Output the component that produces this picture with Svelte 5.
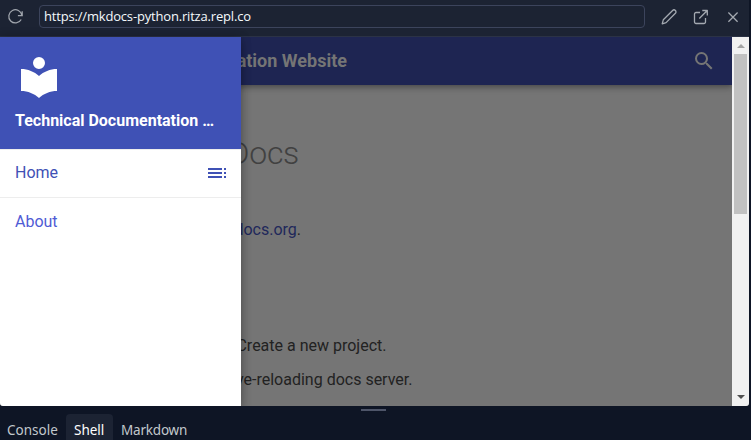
<script>
  const nav = [{ label: 'Home', toc: true }, { label: 'About', toc: false }];
  const tabs = ['Console', 'Shell', 'Markdown'];
  let active = $state('Shell');
</script>

<div class="workspace">
  <section class="browser">
    <header class="address">
      <svg class="reload" width="18" height="18" viewBox="0 0 18 18" fill="none" stroke="#a0a5ad" stroke-width="1.25">
        <path d="M16.200 3.200v4.300h-4.300M15.900 7.300A6.600 6.600 0 1 0 15.200 11.500" />
      </svg>
      <div class="url"><span>https://mkdocs-python.ritza.repl.co</span></div>
      <svg class="edit" width="18" height="18" viewBox="0 0 18 18" fill="none" stroke="#a4a9b1" stroke-width="1.3" stroke-linejoin="round">
        <path d="M2.200 15.900l1.100-4.100L12.600 2.500a1.900 1.900 0 0 1 2.800 2.800L6.100 14.600z" />
      </svg>
      <svg class="open" width="18" height="18" viewBox="0 0 18 18" fill="none" stroke="#a4a9b1" stroke-width="1.3" stroke-linejoin="round">
        <path d="M8 4.500H4a1.500 1.500 0 0 0-1.500 1.500v8A1.500 1.500 0 0 0 4 15.500h8a1.500 1.500 0 0 0 1.500-1.500v-4M10.300 2.500h5v5M15 2.800L7.300 10.500" />
      </svg>
      <svg class="close" width="18" height="18" viewBox="0 0 18 18" fill="none" stroke="#a4a9b1" stroke-width="1.25">
        <path d="M4.400 4.500l9.200 9.200M13.600 4.500l-9.200 9.200" />
      </svg>
    </header>

    <div class="viewport">
      <div class="page">
        <div class="masthead">
          <strong>Technical Documentation Website</strong>
          <svg width="24" height="24" viewBox="0 0 24 24" fill="#757575">
            <path d="M9.500 3A6.500 6.500 0 0 1 16 9.500c0 1.610-.590 3.090-1.560 4.230l.270.270h.790l5 5-1.500 1.500-5-5v-.790l-.270-.270A6.516 6.516 0 0 1 9.500 16a6.500 6.500 0 0 1 0-13m0 2C7 5 5 7 5 9.500S7 14 9.500 14 14 12 14 9.500 12 5 9.500 5z" />
          </svg>
        </div>
        <main>
          <h1>MkDocs</h1>
          <p class="intro"><a href="#docs">mkdocs.org</a>.</p>
          <p class="create">Create a new project.</p>
          <p class="serve">Start the live-reloading docs server.</p>
        </main>
      </div>
      <div class="scrollbar">
        <i class="up"></i>
        <div class="thumb"></div>
        <i class="down"></i>
      </div>

      <aside class="drawer">
        <div class="brand">
          <svg width="48" height="48" viewBox="0 0 24 24" fill="#fff">
            <path d="M12 8a3 3 0 0 0 3-3 3 3 0 0 0-3-3 3 3 0 0 0-3 3 3 3 0 0 0 3 3m0 3.540C9.640 9.350 6.500 8 3 8v11c3.500 0 6.640 1.350 9 3.540 2.360-2.190 5.500-3.540 9-3.540V8c-3.500 0-6.640 1.350-9 3.540z" />
          </svg>
          <strong>Technical Documentation …</strong>
        </div>
        <nav>
          {#each nav as item}
            <a href="#page">
              <span>{item.label}</span>
              {#if item.toc}
                <svg width="24" height="24" viewBox="0 0 24 24" fill="#3f51b5">
                  <path d="M3 7h14v2H3zM3 11h14v2H3zM3 15h14v2H3zM19 7h2v2h-2zM19 11h2v2h-2zM19 15h2v2h-2z" />
                </svg>
              {/if}
            </a>
          {/each}
        </nav>
      </aside>
    </div>
  </section>

  <div class="splitter"><span></span></div>
  <footer>
    {#each tabs as tab}
      <button class:active={active === tab} onclick={() => (active = tab)}>{tab}</button>
    {/each}
  </footer>
</div>

<style>
  :global(body) { overflow: hidden; }
  .workspace {
    width: 751px; height: 440px; overflow: hidden; background: #0e1525;
    display: flex; flex-direction: column; font-family: Roboto, sans-serif;
  }
  .browser { width: 749px; height: 406px; flex: none; border-radius: 0 0 3px 3px; overflow: hidden; }
  .address {
    box-sizing: border-box; height: 37px; background: #1c2333; border-bottom: 1px solid #2b3245;
    display: flex; align-items: flex-start; padding: 5px 7px 0 6px;
  }
  .address svg { flex: none; margin-top: 3px; }
  .url {
    box-sizing: border-box; width: 606px; height: 23px; margin: 0 15px 0 15px;
    border: 1px solid #3c445c; border-radius: 4px; padding-left: 4px;
    color: #f5f9fc; font: 13px/21px "Open Sans", "Noto Sans", sans-serif; letter-spacing: -.18px; white-space: nowrap;
  }
  .edit { margin-right: 14px; }
  .open { margin-right: 14px; }
  .viewport { position: relative; display: flex; height: 369px; background: #757575; }
  .page { width: 732px; overflow: hidden; }
  .masthead {
    height: 48px; box-sizing: border-box; display: flex; align-items: center; justify-content: space-between;
    padding-right: 16px; background: #1e2552; color: #757575;
    box-shadow: 0 0 4px rgba(0,0,0,.15), 0 3px 6px rgba(0,0,0,.28);
  }
  .masthead strong { width: 347px; text-align: right; font-size: 18px; padding-bottom: 2px; }
  main { color: #222; font-size: 16px; line-height: 26px; }
  h1 { width: 299px; margin: 47px 0 0; font-size: 32px; line-height: 42px; font-weight: 300; color: #414141; text-align: right; white-space: nowrap; letter-spacing: -.3px; }
  p { margin: 0; text-align: right; white-space: nowrap; }
  .intro { width: 301px; margin-top: 43px; }
  .intro a { color: #1f285b; text-decoration: none; }
  .create { width: 386.500px; margin-top: 90px; }
  .serve { width: 412.500px; margin-top: 8px; }
  .scrollbar { width: 17px; background: #f1f1f1; display: flex; flex-direction: column; align-items: center; }
  .scrollbar i { width: 0; height: 0; border: 4px solid transparent; }
  .scrollbar .up { border-top-width: 0; border-bottom-color: #a3a3a3; margin: 7px 0 6px; }
  .thumb { width: 13px; height: 160px; background: #c1c1c1; }
  .scrollbar .down { border-bottom-width: 0; border-top-color: #505050; margin: auto 0 7px; }
  .drawer {
    position: absolute; left: 0; top: 0; width: 241px; height: 369px; background: #fff;
    box-shadow: 0 4px 10px rgba(0,0,0,.25), 0 0 10px rgba(0,0,0,.18);
  }
  .brand { height: 112px; box-sizing: border-box; padding: 16px 15px 0; background: #3f51b5; color: #fff; display: flex; flex-direction: column; }
  .brand svg { flex: none; }
  .brand strong { margin-top: 9px; font-size: 16px; line-height: 21px; white-space: nowrap; }
  nav a {
    box-sizing: border-box; height: 49px; border-top: 1px solid #ededed; padding: 0 12px 2px 15px;
    display: flex; align-items: center; justify-content: space-between; color: #4051b5; text-decoration: none; font-size: 16px;
  }
  nav a:first-child { height: 48px; }
  nav a:first-child span { padding-bottom: 1px; }
  nav a:last-child { color: #4f5bd5; padding-bottom: 1px; }
  .splitter { height: 8px; display: flex; justify-content: center; flex: none; }
  .splitter span { width: 25px; height: 2px; margin: 3px 4px 0 0; background: #4e5569; }
  footer { height: 26px; display: flex; }
  button {
    box-sizing: border-box; height: 34px; border: 0; background: none; color: #c2c8cc; padding: 0 8px;
    font: 13.500px/32px "Noto Sans", sans-serif; border-radius: 4px; display: flex; align-items: flex-start;
  }
  button:first-child { width: 66px; padding: 0 0 0 7px; }
  button:last-child { letter-spacing: -.2px; }
  button.active { background: #1c2333; color: #fff; width: 47px; }
</style>
